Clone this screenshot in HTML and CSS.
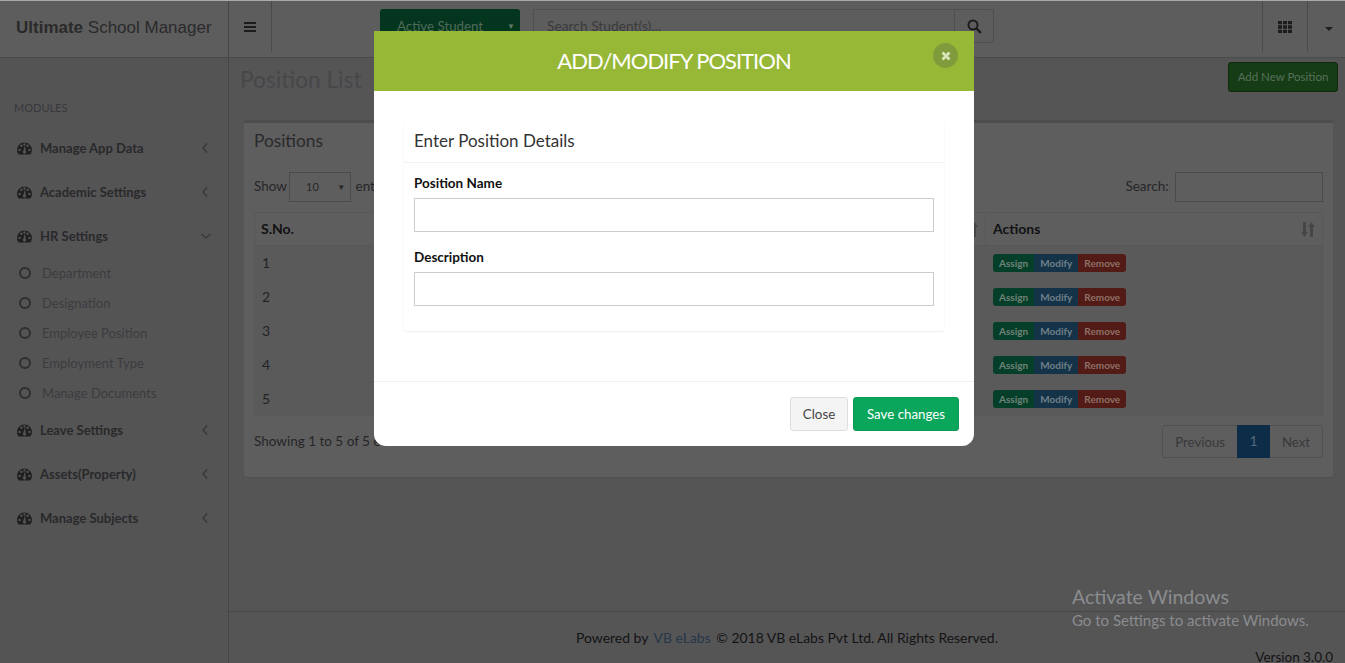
FILE: index.html
```html
<!DOCTYPE html>
<html lang="en">
<head>
    <meta charset="UTF-8">
    <title>Position List</title>
    <link rel="stylesheet" href="styles.css">
</head>
<body>
    <svg class="defs" width="0" height="0">
        <symbol id="gauge" viewBox="0 0 16 14">
            <path fill-rule="evenodd" d="M8 0.5C3.6 0.5 0 4.1 0 8.5c0 1.9.6 3.4 1.7 4.7.2.2.4.3.7.3h11.2c.3 0 .5-.1.7-.3 1.1-1.3 1.7-2.8 1.7-4.7 0-4.4-3.6-8-8-8zM2.7 9.8a1.3 1.3 0 1 1 0-2.6 1.3 1.3 0 0 1 0 2.6zM4.6 5.4a1.3 1.3 0 1 1 0-2.6 1.3 1.3 0 0 1 0 2.6zM8 3.9a1.3 1.3 0 1 1 0-2.6 1.3 1.3 0 0 1 0 2.6zM9.5 11.6a1.9 1.9 0 0 1-3 0c-.5-.7-.4-1.7.3-2.3L8.3 4.4c.1-.2.4-.2.5.1l.3 4.9c.7.5 1 1.5.4 2.2zM11.4 5.4a1.3 1.3 0 1 1 0-2.6 1.3 1.3 0 0 1 0 2.6zM13.3 9.8a1.3 1.3 0 1 1 0-2.6 1.3 1.3 0 0 1 0 2.6z"/>
        </symbol>
        <symbol id="left" viewBox="0 0 8 12">
            <path d="M6 1.5 2 6l4 4.5" fill="none" stroke="currentColor" stroke-width="1.2"/>
        </symbol>
        <symbol id="down" viewBox="0 0 12 8">
            <path d="M1.5 2 6 6l4.5-4" fill="none" stroke="currentColor" stroke-width="1.2"/>
        </symbol>
        <symbol id="sort" viewBox="0 0 14 15">
            <path d="M2 0h3v10h2l-3.500 5L0 10h2zM9 15h3V5h2l-3.500-5L7 5h2z"/>
        </symbol>
    </svg>

    <div class="app">
        <aside class="sidebar">
            <div class="logo"><b>Ultimate</b> School Manager</div>
            <p class="modules">MODULES</p>
            <ul class="menu">
                <li class="item"><svg class="gauge"><use href="#gauge"/></svg><span>Manage App Data</span><svg class="arrow"><use href="#left"/></svg></li>
                <li class="item"><svg class="gauge"><use href="#gauge"/></svg><span>Academic Settings</span><svg class="arrow"><use href="#left"/></svg></li>
                <li class="item"><svg class="gauge"><use href="#gauge"/></svg><span>HR Settings</span><svg class="arrow arrow-down"><use href="#down"/></svg></li>
                <li class="sub"><i class="ring"></i>Department</li>
                <li class="sub"><i class="ring"></i>Designation</li>
                <li class="sub"><i class="ring"></i>Employee Position</li>
                <li class="sub"><i class="ring"></i>Employment Type</li>
                <li class="sub"><i class="ring"></i>Manage Documents</li>
                <li class="item"><svg class="gauge"><use href="#gauge"/></svg><span>Leave Settings</span><svg class="arrow"><use href="#left"/></svg></li>
                <li class="item"><svg class="gauge"><use href="#gauge"/></svg><span>Assets(Property)</span><svg class="arrow"><use href="#left"/></svg></li>
                <li class="item"><svg class="gauge"><use href="#gauge"/></svg><span>Manage Subjects</span><svg class="arrow"><use href="#left"/></svg></li>
            </ul>
        </aside>

        <div class="main">
            <header class="topbar">
                <div class="cell cell-bars">
                    <svg width="12" height="12" viewBox="0 0 12 12"><path d="M0 1h12v2H0zM0 5h12v2H0zM0 9h12v2H0z" fill="#1c1c1c"/></svg>
                </div>
                <div class="student-select">Active Student<span class="tri">▼</span></div>
                <div class="search-group">
                    <div class="search-input">Search Student(s)...</div>
                    <div class="search-btn">
                        <svg width="15" height="15" viewBox="0 0 15 15"><circle cx="6" cy="6" r="4.500" fill="none" stroke="#1c1c1c" stroke-width="2"/><path d="m9.500 9.500 4.300 4.300" stroke="#1c1c1c" stroke-width="2.400"/></svg>
                    </div>
                </div>
                <div class="cell cell-grid">
                    <svg width="14" height="12" viewBox="0 0 14 12"><path d="M0 0h4v3.300H0zM5 0h4v3.300H5zM10 0h4v3.300h-4zM0 4.300h4v3.400H0zM5 4.300h4v3.400H5zM10 4.300h4v3.400h-4zM0 8.700h4V12H0zM5 8.700h4V12H5zM10 8.700h4V12h-4z" fill="#1c1c1c"/></svg>
                </div>
                <div class="cell-caret"><i class="caret"></i></div>
            </header>

            <div class="content">
                <div class="title-row">
                    <h1>Position List</h1>
                    <a class="add-btn">Add New Position</a>
                </div>

                <section class="panel">
                    <h2>Positions</h2>
                    <div class="table-tools">
                        <div class="length">Show <span class="length-select">10<span class="tri">▼</span></span> entries</div>
                        <div class="filter">Search: <span class="filter-input"></span></div>
                    </div>
                    <table class="positions">
                        <thead>
                            <tr>
                                <th class="col-no">S.No.</th>
                                <th class="col-name">Position Name</th>
                                <th class="col-desc"><svg class="sort"><use href="#sort"/></svg></th>
                                <th class="col-act">Actions<svg class="sort"><use href="#sort"/></svg></th>
                            </tr>
                        </thead>
                        <tbody>
                            <tr><td>1</td><td></td><td></td><td><span class="tag tag-assign">Assign</span><span class="tag tag-modify">Modify</span><span class="tag tag-remove">Remove</span></td></tr>
                            <tr><td>2</td><td></td><td></td><td><span class="tag tag-assign">Assign</span><span class="tag tag-modify">Modify</span><span class="tag tag-remove">Remove</span></td></tr>
                            <tr><td>3</td><td></td><td></td><td><span class="tag tag-assign">Assign</span><span class="tag tag-modify">Modify</span><span class="tag tag-remove">Remove</span></td></tr>
                            <tr><td>4</td><td></td><td></td><td><span class="tag tag-assign">Assign</span><span class="tag tag-modify">Modify</span><span class="tag tag-remove">Remove</span></td></tr>
                            <tr><td>5</td><td></td><td></td><td><span class="tag tag-assign">Assign</span><span class="tag tag-modify">Modify</span><span class="tag tag-remove">Remove</span></td></tr>
                        </tbody>
                    </table>
                    <div class="table-foot">
                        <div>Showing 1 to 5 of 5 entries</div>
                        <div class="pager"><span>Previous</span><span class="current">1</span><span>Next</span></div>
                    </div>
                </section>
            </div>

            <footer class="footer">
                <p>Powered by <a>VB eLabs</a> © 2018 VB eLabs Pvt Ltd. All Rights Reserved.</p>
                <p class="version">Version 3.0.0</p>
            </footer>
        </div>
    </div>

    <div class="modal">
        <div class="modal-head">
            <h3>ADD/MODIFY POSITION</h3>
            <span class="modal-x">
                <svg width="10" height="10" viewBox="0 0 10 10"><path d="m1.500 1.500 7 7m0-7-7 7" stroke="#dbe5bd" stroke-width="2.800"/></svg>
            </span>
        </div>
        <div class="modal-body">
            <div class="form-box">
                <div class="form-title">Enter Position Details</div>
                <form class="form-fields">
                    <label for="posName">Position Name</label>
                    <input type="text" id="posName">
                    <label for="posDesc">Description</label>
                    <input type="text" id="posDesc">
                </form>
            </div>
        </div>
        <div class="modal-foot">
            <button type="button" class="btn-close">Close</button>
            <button type="button" class="btn-save">Save changes</button>
        </div>
    </div>

    <div class="watermark">
        <div class="wm-big">Activate Windows</div>
        <div class="wm-small">Go to Settings to activate Windows.</div>
    </div>
</body>
</html>
```

FILE: styles.css
```css
* {
    box-sizing: border-box;
}

html, body {
    height: 100%;
}

body {
    margin: 0;
    overflow: hidden;
    font-family: "Lato", "Noto Sans", sans-serif;
    font-size: 14px;
    color: #262628;
    background: #555556;
}

.defs {
    position: absolute;
}

.app {
    display: flex;
    height: 100vh;
    border-top: 1px solid #a9a9a9;
}

/* sidebar */
.sidebar {
    width: 229px;
    flex-shrink: 0;
    background: #545455;
    border-right: 1px solid #464648;
}

.logo {
    height: 57px;
    padding-left: 16px;
    line-height: 54px;
    font-family: "Liberation Sans", sans-serif;
    font-size: 17px;
    color: #2a2a2b;
    background: #5d5d5d;
    border-bottom: 1px solid #4a4a4c;
}

.modules {
    margin: 43px 0 11px 14px;
    font-size: 11px;
    line-height: 14px;
    color: #38383b;
}

.menu {
    list-style: none;
    margin: 0;
    padding: 0;
}

.item {
    display: flex;
    align-items: center;
    height: 44px;
    padding-left: 17px;
    font-size: 13px;
    font-weight: 700;
    color: #29292b;
}

.gauge {
    width: 15px;
    height: 13px;
    margin-right: 8px;
    fill: #1f1f20;
}

.item span {
    flex: 1;
}

.arrow {
    width: 8px;
    height: 12px;
    margin-right: 19px;
    color: #363638;
}

.arrow-down {
    width: 12px;
    height: 8px;
    margin-right: 16px;
}

.sub {
    display: flex;
    align-items: center;
    height: 30px;
    padding-left: 19px;
    font-size: 13px;
    color: #3c3c3f;
}

.ring {
    width: 12px;
    height: 12px;
    margin-right: 11px;
    border: 2px solid #2f2f31;
    border-radius: 50%;
}

/* top bar */
.main {
    flex: 1;
    min-width: 0;
    display: flex;
    flex-direction: column;
}

.topbar {
    display: flex;
    height: 57px;
    background: #5d5d5d;
    border-bottom: 1px solid #4a4a4c;
}

.cell {
    display: flex;
    align-items: center;
    justify-content: center;
    height: 51px;
}

.cell-bars {
    width: 43px;
    border-right: 1px solid #4a4a4c;
}

.student-select {
    display: flex;
    align-items: center;
    justify-content: space-between;
    width: 140px;
    height: 34px;
    margin: 8px 13px 0 108px;
    padding: 0 5px 0 17px;
    font-size: 13.300px;
    color: #506a58;
    background: #04361f;
    border-radius: 3px 3px 0 0;
}

.tri {
    font-size: 8px;
    color: #5f7a68;
}

.search-group {
    display: flex;
    height: 34px;
    margin-top: 8px;
}

.search-input {
    width: 422px;
    padding-left: 13px;
    line-height: 32px;
    font-size: 13.800px;
    color: #3a3a3c;
    border: 1px solid #4f4f51;
}

.search-btn {
    display: flex;
    align-items: center;
    justify-content: center;
    width: 39px;
    border: 1px solid #4f4f51;
    border-left: 0;
    border-radius: 0 3px 3px 0;
}

.cell-grid {
    width: 46px;
    margin-left: 268px;
    border-left: 1px solid #4a4a4c;
    border-right: 1px solid #4a4a4c;
}

.cell-caret {
    flex: 1;
    display: flex;
    align-items: center;
    justify-content: center;
    height: 55px;
    padding-left: 4px;
}

.caret {
    border-top: 4px solid #1f1f20;
    border-left: 4px solid transparent;
    border-right: 4px solid transparent;
}

/* page content */
.content {
    flex: 1;
    min-height: 0;
}

.title-row {
    display: flex;
    justify-content: space-between;
    padding: 4px 7px 0 11px;
    height: 62px;
}

.title-row h1 {
    margin: 3px 0 0;
    font-size: 22.700px;
    font-weight: 400;
    line-height: 30px;
    color: #47474a;
}

.add-btn {
    width: 110px;
    height: 30px;
    line-height: 28px;
    text-align: center;
    font-size: 11.500px;
    color: #58705a;
    background: #163c16;
    border: 1px solid #0f280f;
    border-radius: 3px;
}

.panel {
    height: 357px;
    margin: 0 12px 0 15px;
    padding: 0 10px;
    background: #5e5e5e;
    border-top: 3px solid #4d4d4f;
    border-radius: 3px;
    box-shadow: 0 1px 1px #505053;
}

.panel h2 {
    margin: 0;
    padding-top: 5px;
    padding-bottom: 2px;
    font-size: 17.300px;
    font-weight: 400;
    line-height: 26px;
    color: #29292b;
}

.table-tools {
    display: flex;
    justify-content: space-between;
    height: 30px;
    margin-top: 16px;
    line-height: 28px;
    font-size: 13.500px;
}

.length-select {
    display: inline-flex;
    align-items: center;
    justify-content: space-between;
    width: 62px;
    height: 30px;
    margin: 0 1px 0 -1px;
    padding: 0 5px 0 16px;
    font-size: 11px;
    border: 1px solid #4a4a4c;
    vertical-align: top;
}

.length-select .tri {
    color: #262628;
}

.filter-input {
    display: inline-block;
    width: 148px;
    height: 30px;
    margin-left: 3px;
    border: 1px solid #4a4a4c;
    vertical-align: top;
}

.positions {
    width: 100%;
    margin-top: 10px;
    border-collapse: collapse;
    table-layout: fixed;
}

.positions th, .positions td {
    padding: 0 7px;
    text-align: left;
    border: 1px solid #585859;
}

.positions th {
    position: relative;
    height: 33px;
    padding-bottom: 2px;
    font-size: 14px;
    color: #121213;
}

.positions .col-no {
    padding-left: 6px;
}

.positions td {
    height: 34px;
    font-size: 14px;
    color: #232324;
    background: #5a5a5b;
}

.col-no {
    width: 120px;
}

.col-name {
    width: 300px;
}

.col-act {
    width: 337px;
}

.sort {
    position: absolute;
    right: 7px;
    top: 9px;
    width: 14px;
    height: 15px;
    fill: #464648;
}

.tag {
    display: inline-block;
    height: 18px;
    padding: 0 6px;
    line-height: 18px;
    vertical-align: middle;
    font-size: 10px;
    font-weight: 700;
    color: #708278;
}

.tag-assign {
    background: #063f29;
    border-radius: 3px 0 0 3px;
}

.tag-modify {
    color: #707f89;
    background: #143348;
}

.tag-remove {
    color: #8e7169;
    background: #521b15;
    border-radius: 0 3px 3px 0;
}

.table-foot {
    display: flex;
    justify-content: space-between;
    margin-top: 9px;
    font-size: 13.200px;
}

.table-foot > div:first-child {
    padding-top: 8px;
    font-size: 13.500px;
}

.pager {
    display: flex;
    height: 33px;
    line-height: 33px;
    color: #38383a;
    border: 1px solid #505052;
    border-radius: 3px;
}

.pager span {
    padding: 0 12px;
}

.pager .current {
    width: 33px;
    margin: -1px 0;
    line-height: 33px;
    text-align: center;
    color: #566a7d;
    background: #0d2c47;
}

.footer {
    height: 52px;
    padding-top: 16px;
    font-size: 13.950px;
    color: #131314;
    border-top: 1px solid #47474a;
}

.footer p {
    margin: 0;
    text-align: center;
    line-height: 20px;
}

.footer a {
    margin: 0 2px;
    color: #26374a;
}

.footer .version {
    margin-top: -1px;
    padding-right: 12px;
    text-align: right;
    font-size: 13.500px;
}

/* the dialog */
.modal {
    position: absolute;
    left: 374px;
    top: 31px;
    width: 600px;
    height: 415px;
    background: #fff;
    border-radius: 0 0 12px 12px;
}

.modal-head {
    position: relative;
    height: 60px;
    background: #97b837;
}

.modal-head h3 {
    margin: 0;
    text-align: center;
    line-height: 60px;
    font-size: 22px;
    font-weight: 400;
    letter-spacing: -1px;
    color: #fff;
}

.modal-x {
    position: absolute;
    right: 16px;
    top: 12px;
    display: flex;
    align-items: center;
    justify-content: center;
    width: 25px;
    height: 25px;
    background: #7f9c3c;
    border-radius: 50%;
}

.modal-body {
    height: 291px;
    padding: 31px 30px 0;
    border-bottom: 1px solid #f1f1f1;
}

.form-box {
    height: 209px;
    border-radius: 3px;
    box-shadow: 0 1px 2px rgba(0, 0, 0, .08);
}

.form-title {
    height: 41px;
    padding-left: 10px;
    line-height: 37px;
    font-size: 17px;
    color: #333;
    border-bottom: 1px solid #f2f2f2;
}

.form-fields {
    padding: 9px 10px 0;
}

.form-fields label {
    display: block;
    height: 26px;
    line-height: 22px;
    font-size: 13.500px;
    font-weight: 700;
    color: #111;
}

.form-fields input {
    display: block;
    width: 100%;
    height: 34px;
    margin-bottom: 14px;
    border: 1px solid #ccc;
}

.modal-foot {
    display: flex;
    justify-content: flex-end;
    gap: 5px;
    padding: 15px 15px 0;
}

.modal-foot button {
    height: 34px;
    font-family: inherit;
    font-size: 13.300px;
    border-radius: 3px;
}

.btn-close {
    width: 58px;
    color: #444;
    background: #f4f4f4;
    border: 1px solid #ddd;
}

.btn-save {
    width: 106px;
    color: #fff;
    background: #0aa65c;
    border: 1px solid #089a54;
}

.watermark {
    position: absolute;
    left: 1072px;
    top: 585px;
    color: #8b8c8e;
    pointer-events: none;
}

.wm-big {
    font-size: 19.500px;
    line-height: 24px;
}

.wm-small {
    font-size: 15px;
    line-height: 22px;
}
```
